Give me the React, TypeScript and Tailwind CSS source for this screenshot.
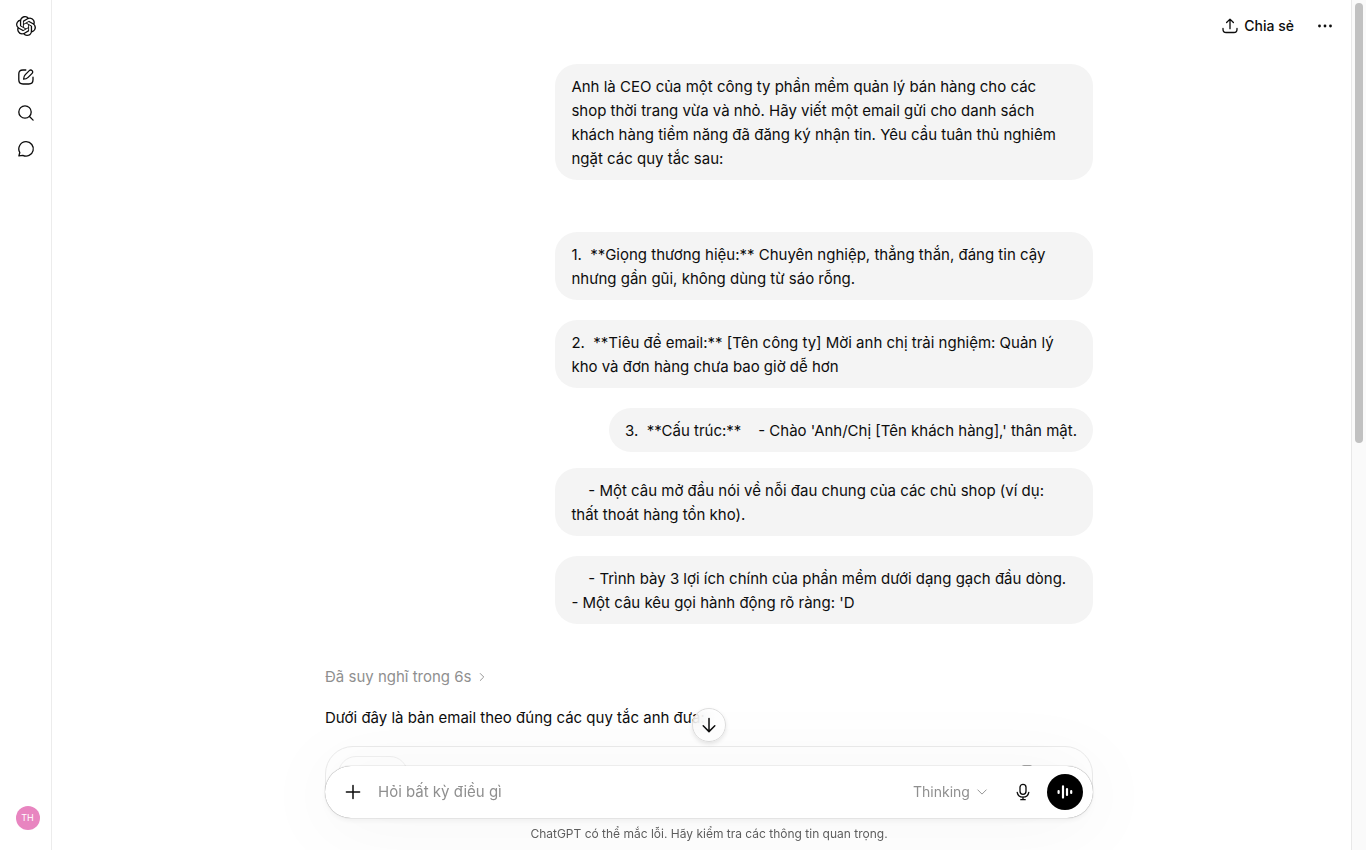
import type { ReactNode } from "react";
import { SiOpenai } from "react-icons/si";

const messages = [
  {
    text: "Anh là CEO của một công ty phần mềm quản lý bán hàng cho các\nshop thời trang vừa và nhỏ. Hãy viết một email gửi cho danh sách\nkhách hàng tiềm năng đã đăng ký nhận tin. Yêu cầu tuân thủ nghiêm\nngặt các quy tắc sau:",
    style: "w-full",
  },
  {
    text: "1.  **Giọng thương hiệu:** Chuyên nghiệp, thẳng thắn, đáng tin cậy\nnhưng gần gũi, không dùng từ sáo rỗng.",
    style: "w-full mt-[52px]",
  },
  {
    text: "2.  **Tiêu đề email:** [Tên công ty] Mời anh chị trải nghiệm: Quản lý\nkho và đơn hàng chưa bao giờ dễ hơn",
    style: "w-full mt-5",
  },
  {
    text: "3.  **Cấu trúc:**    - Chào 'Anh/Chị [Tên khách hàng],' thân mật.",
    style: "mt-5",
  },
  {
    text: "    - Một câu mở đầu nói về nỗi đau chung của các chủ shop (ví dụ:\nthất thoát hàng tồn kho).",
    style: "w-full mt-4",
  },
  {
    text: "    - Trình bày 3 lợi ích chính của phần mềm dưới dạng gạch đầu dòng.\n- Một câu kêu gọi hành động rõ ràng: 'D",
    style: "w-full mt-5",
  },
];

interface IconProps {
  children: ReactNode;
  className?: string;
}

function Icon({ children, className = "h-5 w-5" }: IconProps) {
  return (
    <svg
      viewBox="0 0 20 20"
      fill="none"
      stroke="currentColor"
      strokeWidth="1.33"
      strokeLinecap="round"
      strokeLinejoin="round"
      aria-hidden="true"
      className={className}
    >
      {children}
    </svg>
  );
}

function SidebarButton({ label, children }: { label: string; children: ReactNode }) {
  return (
    <button aria-label={label} className="flex h-9 w-9 items-center justify-center rounded-lg hover:bg-gray-100">
      {children}
    </button>
  );
}

function Sidebar() {
  return (
    <aside className="flex w-[52px] shrink-0 flex-col items-center border-r border-[#ececec] pt-2 pb-5">
      <SidebarButton label="ChatGPT">
        <SiOpenai className="h-5 w-5" />
      </SidebarButton>
      <nav className="mt-[15px] flex flex-col">
        <SidebarButton label="Đoạn chat mới">
          <Icon>
            <path d="M9.8 3H7C4 3 2.8 4.2 2.8 7.1v5.7C2.8 15.7 4 17 7 17h5.8c2.9 0 4.2-1.300 4.200-4.200V10.200" />
            <path d="M7.600 12.200c0-2.500.5-3.400 1.700-4.600l4-4a1.900 1.900 0 0 1 2.800 2.800l-4 4c-1.200 1.200-2 1.800-4.500 1.800Z" />
          </Icon>
        </SidebarButton>
        <SidebarButton label="Tìm kiếm">
          <Icon>
            <circle cx="9" cy="9" r="6.2" />
            <path d="m13.5 13.5 3.6 3.6" />
          </Icon>
        </SidebarButton>
        <SidebarButton label="Đoạn chat">
          <Icon>
            <path d="M10.2 2.7a7.2 7.2 0 1 1-3.4 13.6l-3.9.6.9-3.4A7.2 7.2 0 0 1 10.2 2.7Z" />
          </Icon>
        </SidebarButton>
      </nav>
      <button aria-label="Tài khoản" className="mt-auto ml-1 flex h-6 w-6 items-center justify-center rounded-full bg-[#e885c0] text-[9px] text-white">
        TH
      </button>
    </aside>
  );
}

function Header() {
  return (
    <header className="flex h-[52px] shrink-0 items-center justify-end gap-0.5 pr-6">
      <button className="flex h-9 items-center gap-1 px-2.5 text-sm font-medium">
        <Icon>
          <path d="M10 12.7V3.2M6.6 6.5 10 3.1l3.4 3.4M3 12.4v.8c0 2.3.8 3.3 3.1 3.3h7.8c2.3 0 3.1-1 3.1-3.3v-.8" />
        </Icon>
        Chia sẻ
      </button>
      <button aria-label="Tùy chọn khác" className="flex h-9 w-9 items-center justify-center">
        <svg viewBox="0 0 20 20" fill="currentColor" className="h-5 w-5">
          <circle cx="5.5" cy="10" r="1.4" />
          <circle cx="11" cy="10" r="1.4" />
          <circle cx="16.5" cy="10" r="1.4" />
        </svg>
      </button>
    </header>
  );
}

function Composer() {
  return (
    <form
      onSubmit={(e) => e.preventDefault()}
      className="relative flex h-[52px] items-center rounded-full bg-white px-2.5 shadow-[0_0_1px_rgba(0,0,0,0.6),0_4px_4px_rgba(0,0,0,0.04),0_4px_80px_8px_rgba(0,0,0,0.04)]"
    >
      <button type="button" aria-label="Thêm tệp" className="flex h-9 w-9 items-center justify-center">
        <Icon>
          <path d="M10 3.4v13.2M3.4 10h13.2" strokeWidth="1.5" />
        </Icon>
      </button>
      <input
        aria-label="Hỏi bất kỳ điều gì"
        placeholder="Hỏi bất kỳ điều gì"
        className="ml-[7px] min-w-0 flex-1 bg-transparent text-[15px] outline-none placeholder:text-[#8f8f8f]"
      />
      <div className="relative flex items-center">
        <select aria-label="Chế độ" className="w-20 appearance-none bg-transparent text-sm text-[#8f8f8f] outline-none">
          <option>Thinking</option>
        </select>
        <Icon className="pointer-events-none absolute right-1 h-3.5 w-3.5 text-[#8f8f8f]">
          <path d="m4 7 6 6 6-6" />
        </Icon>
      </div>
      <button type="button" aria-label="Đọc chính tả" className="ml-3 flex h-9 w-9 items-center justify-center">
        <Icon>
          <rect x="7" y="2.3" width="6" height="10" rx="3" />
          <path d="M4.2 10.3a5.9 5.9 0 0 0 11.6 0M10 15v2.7M7.8 17.7h4.4" />
        </Icon>
      </button>
      <button type="button" aria-label="Chế độ thoại" className="ml-1.5 flex h-9 w-9 items-center justify-center rounded-full bg-black text-white">
        <Icon>
          <path d="M3.6 9v2M8 4.4v11.2M12 7v6M16.200 9v2" strokeWidth="2.2" />
        </Icon>
      </button>
    </form>
  );
}

export default function App() {
  return (
    <div className="relative flex h-screen overflow-hidden bg-white font-[Inter,'Liberation_Sans',sans-serif] text-[#0d0d0d]">
      <Sidebar />
      <div className="relative flex min-w-0 flex-1 flex-col">
        <Header />
        <main className="min-h-0 flex-1 overflow-hidden px-4 pt-3">
          <div className="mx-auto flex max-w-3xl flex-col text-[15px] leading-6">
            {messages.map((message) => (
              <div
                key={message.text}
                className={`max-w-[70%] self-end rounded-[22px] bg-[#f4f4f4] px-4 pt-[11px] pb-[9px] whitespace-pre-wrap ${message.style}`}
              >
                {message.text}
              </div>
            ))}
            <button className="mt-[41px] flex items-center gap-1 self-start text-[#8f8f8f]">
              Đã suy nghĩ trong 6s
              <Icon className="h-3.5 w-3.5">
                <path d="m7.5 5 5 5-5 5" />
              </Icon>
            </button>
            <p className="mt-[17px]">Dưới đây là bản email theo đúng các quy tắc anh đưa:</p>
            <section className="mt-4 flex h-60 items-start justify-between rounded-[28px] border border-[#ebebeb] px-3 pt-[9px]">
              <div className="h-9 w-[70px] rounded-full border border-[#f0f0f0]" />
              <Icon className="mt-2 mr-[45px] h-5 w-5 text-[#8f8f8f]">
                <rect x="7" y="2" width="10" height="10" rx="2" />
                <rect x="3" y="7" width="10" height="10" rx="2" />
              </Icon>
            </section>
          </div>
        </main>

        <div className="absolute inset-x-0 bottom-0 px-4">
          <div className="absolute inset-x-0 bottom-0 h-14 bg-white" />
          <div className="relative mx-auto flex max-w-3xl flex-col">
            <button
              aria-label="Cuộn xuống cuối"
              className="mb-6 flex h-[34px] w-[34px] items-center justify-center self-center rounded-full border border-[#dedede] bg-white/70 shadow-[0_2px_4px_rgba(0,0,0,0.1)] backdrop-blur-sm"
            >
              <Icon>
                <path d="M10 3.4v13.2M4.2 10.8l5.8 5.8 5.8-5.8" strokeWidth="1.5" />
              </Icon>
            </button>
            <Composer />
            <p className="relative flex h-8 items-center justify-center text-xs text-[#5d5d5d]">
              ChatGPT có thể mắc lỗi. Hãy kiểm tra các thông tin quan trọng.
            </p>
          </div>
        </div>
      </div>

      <div aria-hidden="true" className="absolute inset-y-0 right-0 w-[15px] border-l border-[#e8e8e8] bg-[#fafafa] pt-[3px] pl-[3px]">
        <div className="h-[52%] w-2 rounded-full bg-[#c1c1c1]" />
      </div>
    </div>
  );
}
